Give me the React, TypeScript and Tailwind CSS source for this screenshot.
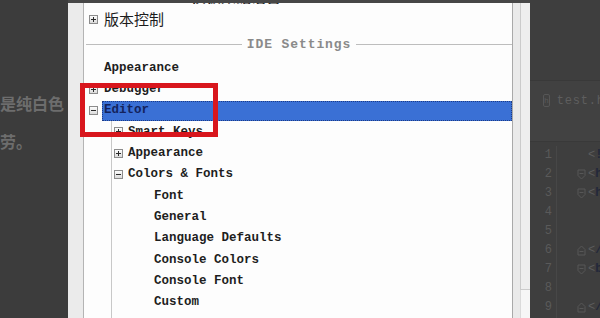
const mono = "font-['Liberation_Mono','DejaVu_Sans_Mono',monospace]";
const cjk = "font-['Noto_Sans_CJK_SC',sans-serif]";

function Toggle({ open }: { open?: boolean }) {
  return (
    <svg width="9" height="9" viewBox="0 0 9 9" className="shrink-0">
      <defs>
        <linearGradient id="tg" x1="0" y1="0" x2="0" y2="1">
          <stop offset="0" stopColor="#ffffff" />
          <stop offset="1" stopColor="#d8d8d8" />
        </linearGradient>
      </defs>
      <rect x="0.5" y="0.5" width="8" height="8" fill="url(#tg)" stroke="#8c8c8c" />
      <path d="M2 4.5H7" stroke="#2a2a2a" />
      {!open && <path d="M4.5 2V7" stroke="#2a2a2a" />}
    </svg>
  );
}

function Fold({ end }: { end?: boolean }) {
  return (
    <svg width="9" height="11" viewBox="0 0 9 11">
      <path
        d={end ? "M1 10H8V4.5L4.5 1L1 4.5Z" : "M1 1H8V6.5L4.5 10L1 6.5Z"}
        fill="none"
        stroke="#575757"
      />
      <path d={end ? "M2.5 6.5H6.5" : "M2.5 4.5H6.5"} stroke="#575757" />
    </svg>
  );
}

const leaves = ["Font", "General", "Language Defaults", "Console Colors", "Console Font", "Custom", "Diff"];

const code: { tag?: string; close?: boolean; fold?: "open" | "end" }[] = [
  { tag: "!" },
  { tag: "h", fold: "open" },
  { tag: "h", fold: "open" },
  {},
  {},
  { tag: "/", close: true, fold: "end" },
  { tag: "b", fold: "open" },
  {},
  { tag: "/", close: true, fold: "end" },
];

export default function App() {
  return (
    <div className="relative flex h-[318px] w-[600px] overflow-hidden bg-[#3c3c3c]">
      {/* dimmed page text */}
      <div className={`w-[68px] shrink-0 pt-[84px] text-[16px] font-bold leading-[38px] text-[#6d6d6d] ${cjk}`}>
        <p className="whitespace-nowrap">是纯白色</p>
        <p className="whitespace-nowrap">劳。</p>
      </div>

      {/* settings dialog */}
      <div className="flex w-[462px] shrink-0 border-t-[3px] border-[#474747]">
        <div className="w-[16px] shrink-0 border-r border-[#b4b4b4] bg-[#ebebeb]" />

        <div className={`w-[428px] shrink-0 overflow-hidden bg-[#fdfdfd] text-[12.5px] font-bold text-[#1e1e1e] ${mono}`}>
          <div className="h-[4px] overflow-hidden">
            <p className={`-mt-[16px] pl-[107px] text-[15px] leading-[18px] text-[#2a2a2a] ${cjk}`}>模板数据语言</p>
          </div>
          <div className="flex h-[24px] items-center pl-[5px]">
            <Toggle />
            <span className={`ml-[6px] text-[15px] font-normal text-[#1c1c1c] ${cjk}`}>版本控制</span>
          </div>
          <div className="flex h-[27px] items-center pl-[2px]">
            <div className="h-px flex-1 bg-[#bdbdbd]" />
            <span className="mx-[5px] text-[13px] tracking-[0.9px] text-[#8a8a8a]">IDE Settings</span>
            <div className="h-px flex-1 bg-[#bdbdbd]" />
          </div>
          <div className="flex h-[21.5px] items-center pl-[20px]">Appearance</div>
          <div className="flex h-[20.5px] items-center pl-[5px]">
            <Toggle />
            <span className="ml-[6px]">Debugger</span>
          </div>
          <div className="flex h-[21.33px] items-center pl-[5px]">
            <Toggle open />
            <span className="ml-[4px] flex h-[20px] flex-1 items-center border border-dotted border-[#1d3c86] bg-[#3a70d5] pl-[1px] text-[#14235c]">
              Editor
            </span>
          </div>
          <div className="ml-[27px] border-l border-[#c8c8c8]">
            <div className="flex h-[21.33px] items-center pl-[2px]">
              <Toggle />
              <span className="ml-[5px]">Smart Keys</span>
            </div>
            <div className="flex h-[21.33px] items-center pl-[2px]">
              <Toggle />
              <span className="ml-[5px]">Appearance</span>
            </div>
            <div className="flex h-[21.33px] items-center pl-[2px]">
              <Toggle open />
              <span className="ml-[5px]">Colors &amp; Fonts</span>
            </div>
            {leaves.map((t) => (
              <div key={t} className="flex h-[21.33px] items-center pl-[42px]">
                {t}
              </div>
            ))}
          </div>
        </div>

        <div className="flex w-[18px] shrink-0 border-l border-[#a9a9a9] bg-[#eaeaea]">
          <div className="w-[7px]" />
          <div className="flex flex-1 flex-col">
            <div className="h-[287px] border-b border-l border-[#cbcbcb] bg-[#eeeeee]" />
            <div className="flex-1 border-l border-[#dadada] bg-[#f6f6f6]" />
          </div>
        </div>
      </div>

      {/* dimmed editor */}
      <div className="flex w-[70px] shrink-0 flex-col bg-[#3e3e3e]">
        <div className="h-[80px]" />
        <div className="flex h-[40px] items-center gap-[7px] border-t border-[#393939] bg-[#414141] pl-[13px]">
          <span className={`flex h-[13px] w-[10px] items-center justify-center rounded-[2px] border border-[#565656] text-[8px] text-[#5a5a5a] ${mono}`}>
            h
          </span>
          <span className={`whitespace-nowrap text-[12px] tracking-[0.8px] text-[#5e5e5e] ${mono}`}>test.html</span>
        </div>
        <div className="h-[22px] border-b border-[#393939] bg-[#424242]" />
        <div className={`flex flex-1 pt-[3.5px] text-[12px] ${mono}`}>
          <div className="w-[27px] shrink-0 border-r border-[#474747] pr-[4px] text-right text-[#5a5a5a]">
            {code.map((_, i) => (
              <div key={i} className="flex h-[19px] items-center justify-end">
                {i + 1}
              </div>
            ))}
          </div>
          <div className="w-[31px] shrink-0 pl-[20px]">
            {code.map((c, i) => (
              <div key={i} className="flex h-[19px] items-center">
                {c.fold && <Fold end={c.fold === "end"} />}
              </div>
            ))}
          </div>
          <div className="flex-1 whitespace-nowrap">
            {code.map((c, i) => (
              <div key={i} className="flex h-[19px] items-center">
                {c.tag && (
                  <>
                    <span className="text-[#5c5c5c]">&lt;</span>
                    <span className="font-bold text-[#23283a]">{c.tag === "/" ? "/h" : c.tag}</span>
                  </>
                )}
              </div>
            ))}
          </div>
        </div>
      </div>

      {/* red annotation box */}
      <div className="absolute left-[80px] top-[83px] h-[54px] w-[138px] border-[5px] border-[#d8161d]" />
    </div>
  );
}
